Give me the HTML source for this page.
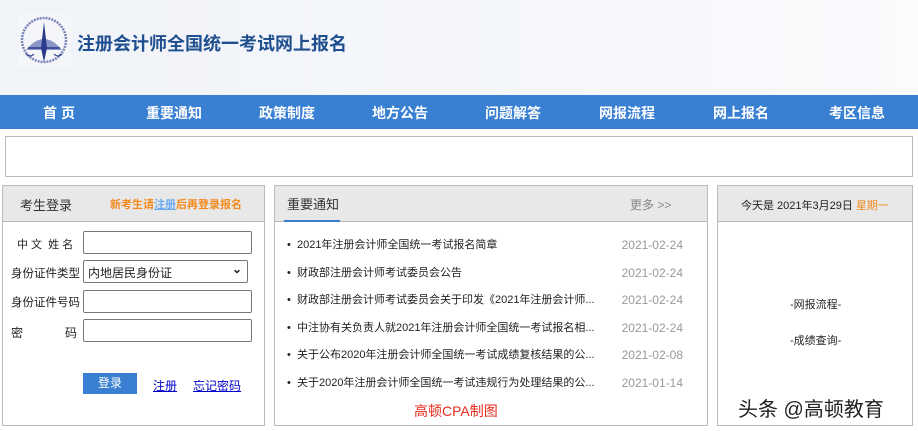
<!DOCTYPE html>
<html><head><meta charset="utf-8"><style>
*{margin:0;padding:0;box-sizing:border-box}
body{width:918px;height:431px;overflow:hidden;background:#fff;font-family:"Liberation Sans","Noto Sans CJK SC",sans-serif;font-size:12px;color:#222;position:relative}
.hdr{position:absolute;left:0;top:0;width:918px;height:95px;background:linear-gradient(90deg,#f0f3f8,#f5f7fb 60%,#fafbfd)}
.title{position:absolute;left:77px;top:30px;font-size:18px;font-weight:bold;color:#1f4f8f;letter-spacing:0}
.nav{position:absolute;left:0;top:95px;width:918px;height:34px;background:#3a80d2}
.nav span{position:absolute;top:8px;color:#fff;font-weight:bold;font-size:14px;transform:translateX(-50%);white-space:nowrap}
.ban{position:absolute;left:5px;top:136px;width:908px;height:41px;border:1px solid #bbb}
.p{position:absolute;top:185px;height:241px;border:1px solid #bbb}
.ph{height:36px;background:#e8e8e8;border-bottom:1px solid #bbb;position:relative}
.a{position:absolute;font-size:12px;white-space:nowrap}
input,.sel{position:absolute;height:23px;border:1px solid #777;border-radius:2px;background:#fff}
</style></head><body>
<div class="hdr">
<svg style="position:absolute;left:18px;top:14px" width="53" height="53" viewBox="0 0 53 53">
<rect width="53" height="53" fill="#f4f6fa"/>
<circle cx="26" cy="26" r="22" fill="none" stroke="#7a86b8" stroke-width="2.5" stroke-dasharray="2 1"/>
<path d="M8 36 Q26 14 44 36" fill="#8c95c8"/>
<path d="M26 8 L29 34 L26 48 L23 34Z" fill="#2b3a8a"/>
<path d="M10 34 H42" stroke="#2b3a8a" stroke-width="1.5"/>
<path d="M8 40 Q12 44 16 40 M36 40 Q40 44 44 40" stroke="#2b3a8a" fill="none"/>
</svg>
<div class="title">注册会计师全国统一考试网上报名</div>
</div>
<div class="nav">
<span style="left:59px">首 页</span><span style="left:174px">重要通知</span><span style="left:287px">政策制度</span><span style="left:400px">地方公告</span><span style="left:513px">问题解答</span><span style="left:627px">网报流程</span><span style="left:741px">网上报名</span><span style="left:857px">考区信息</span>
</div>
<div class="ban"></div>

<div class="p" style="left:2px;width:263px">
<div class="ph"><span class="a" style="left:17px;top:9px;font-size:13px;color:#333">考生登录</span>
<span class="a" style="left:107px;top:10px;color:#f28a1c;font-weight:bold;font-size:11px">新考生请<span style="color:#6aaaf0;text-decoration:underline">注册</span>后再登录报名</span></div>
<span class="a" style="left:14px;top:50px;font-size:11px">中 文 &nbsp;姓 名</span>
<span class="a" style="left:8px;top:79px;font-size:11.5px">身份证件类型</span>
<span class="a" style="left:8px;top:108px;font-size:11.5px">身份证件号码</span>
<span class="a" style="left:8px;top:138px">密</span><span class="a" style="left:62px;top:138px">码</span>
<input style="left:80px;top:45px;width:169px">
<div class="sel" style="left:80px;top:74px;width:165px"><span class="a" style="left:4px;top:3px;font-size:12px">内地居民身份证</span><span class="a" style="right:5px;top:1px;font-weight:bold">⌄</span></div>
<input style="left:80px;top:104px;width:169px">
<input style="left:80px;top:133px;width:169px">
<div style="position:absolute;left:80px;top:187px;width:54px;height:21px;background:#3a80d2;color:#fff;text-align:center;line-height:21px">登录</div>
<span class="a" style="left:150px;top:191px;color:#00c;text-decoration:underline">注册</span>
<span class="a" style="left:190px;top:191px;color:#00c;text-decoration:underline">忘记密码</span>
</div>

<div class="p" style="left:274px;width:434px">
<div class="ph"><span class="a" style="left:12px;top:8px;font-size:13px;color:#333">重要通知</span>
<div style="position:absolute;left:9px;bottom:-1px;width:56px;height:2px;background:#3a80d2"></div>
<span class="a" style="left:355px;top:10px;color:#888">更多 &gt;&gt;</span></div>
<div style="position:absolute;left:12px;top:46px;width:396px;font-size:11px;line-height:27.6px">
<div>• &nbsp;2021年注册会计师全国统一考试报名简章<span style="float:right;color:#999;font-size:12px">2021-02-24</span></div>
<div>• &nbsp;财政部注册会计师考试委员会公告<span style="float:right;color:#999;font-size:12px">2021-02-24</span></div>
<div>• &nbsp;财政部注册会计师考试委员会关于印发《2021年注册会计师...<span style="float:right;color:#999;font-size:12px">2021-02-24</span></div>
<div>• &nbsp;中注协有关负责人就2021年注册会计师全国统一考试报名相...<span style="float:right;color:#999;font-size:12px">2021-02-24</span></div>
<div>• &nbsp;关于公布2020年注册会计师全国统一考试成绩复核结果的公...<span style="float:right;color:#999;font-size:12px">2021-02-08</span></div>
<div>• &nbsp;关于2020年注册会计师全国统一考试违规行为处理结果的公...<span style="float:right;color:#999;font-size:12px">2021-01-14</span></div>
</div>
<span class="a" style="left:139px;top:215px;color:#e8291c;font-size:14px">高顿CPA制图</span>
</div>

<div class="p" style="left:717px;width:196px">
<div class="ph"><span class="a" style="left:23px;top:11px;font-size:11px">今天是 2021年3月29日 <span style="color:#f28a1c">星期一</span></span></div>
<span class="a" style="left:72px;top:110px;font-size:11px">-网报流程-</span>
<span class="a" style="left:72px;top:146px;font-size:11px">-成绩查询-</span>
<span class="a" style="left:20px;top:207px;font-size:20px;color:#222">头条 @高顿教育</span>
</div>
</body></html>
